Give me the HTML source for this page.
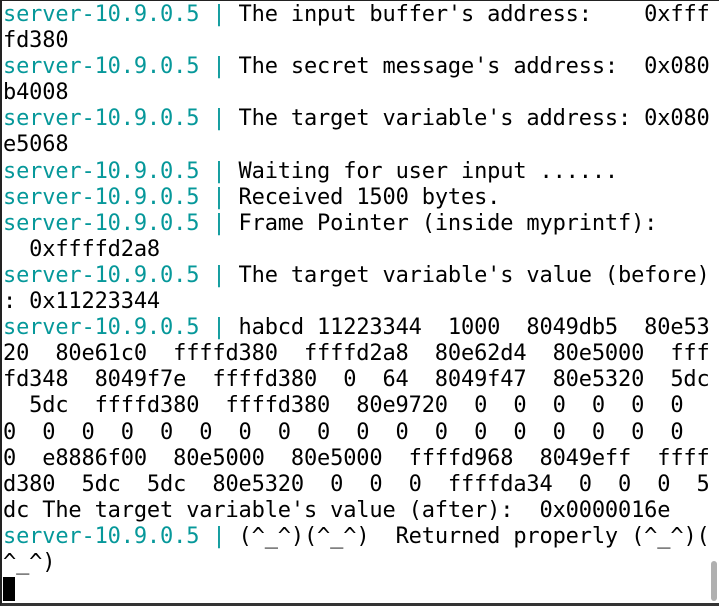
<!DOCTYPE html>
<html><head><style>
html,body{margin:0;padding:0;background:#fff;}
body{width:719px;height:606px;overflow:hidden;position:relative;}
.frame{position:absolute;left:0;top:0;width:717px;height:602px;border-left:2px solid #222;border-top:1px solid #222;border-bottom:3px solid #333;}
pre{position:absolute;left:3px;top:2px;margin:0;font-family:"DejaVu Sans Mono","Liberation Mono",monospace;font-size:22px;line-height:26.1px;color:#000;letter-spacing:-0.16px;}
.t{color:#06989a;}
.cur{display:inline-block;width:12px;height:24px;background:#000;vertical-align:-6px;}
.sb{position:absolute;left:711px;top:561px;width:6px;height:40px;border-radius:3px;background:#b0b0b0;}
</style></head><body>
<div class="frame"></div>
<pre><span class="t">server-10.9.0.5 | </span>The input buffer's address:    0xfff
fd380
<span class="t">server-10.9.0.5 | </span>The secret message's address:  0x080
b4008
<span class="t">server-10.9.0.5 | </span>The target variable's address: 0x080
e5068
<span class="t">server-10.9.0.5 | </span>Waiting for user input ......
<span class="t">server-10.9.0.5 | </span>Received 1500 bytes.
<span class="t">server-10.9.0.5 | </span>Frame Pointer (inside myprintf):
  0xffffd2a8
<span class="t">server-10.9.0.5 | </span>The target variable's value (before)
: 0x11223344
<span class="t">server-10.9.0.5 | </span>habcd 11223344  1000  8049db5  80e53
20  80e61c0  ffffd380  ffffd2a8  80e62d4  80e5000  fff
fd348  8049f7e  ffffd380  0  64  8049f47  80e5320  5dc
  5dc  ffffd380  ffffd380  80e9720  0  0  0  0  0  0
0  0  0  0  0  0  0  0  0  0  0  0  0  0  0  0  0  0
0  e8886f00  80e5000  80e5000  ffffd968  8049eff  ffff
d380  5dc  5dc  80e5320  0  0  0  ffffda34  0  0  0  5
dc The target variable's value (after):  0x0000016e
<span class="t">server-10.9.0.5 | </span>(^_^)(^_^)  Returned properly (^_^)(
^_^)
<span class="cur"></span></pre>
<div class="sb"></div>
</body></html>
